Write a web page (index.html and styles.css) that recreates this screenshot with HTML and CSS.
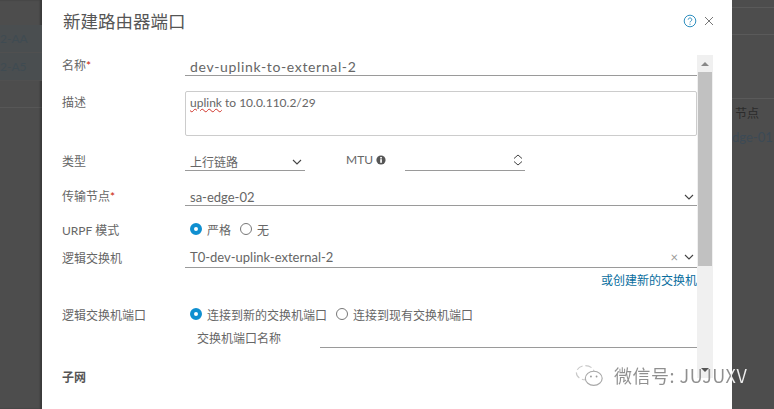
FILE: index.html
```html
<!DOCTYPE html>
<html lang="zh">
  <head>
    <meta charset="UTF-8" />
    <title>新建路由器端口</title>
    <link rel="stylesheet" href="styles.css">
  </head>
  <body>
    <div class="backdrop">
      <div class="side side-left">
        <div class="side-row">2-AA</div>
        <div class="side-row">2-A5</div>
      </div>
      <div class="dialog">
        <div class="dialog-head">
          <h3 class="dialog-title">新建路由器端口</h3>
          <div class="dialog-actions">
            <svg class="help-icon" viewBox="0 0 14 14" width="14" height="14">
              <circle cx="7" cy="7" r="5.8" fill="none" stroke="#2f8fc0" stroke-width="1"/>
              <path d="M5.2 5.6a1.8 1.7 0 1 1 2.7 1.5c-.6.4-.9.7-.9 1.3" fill="none" stroke="#2f8fc0" stroke-width="1"/>
              <circle cx="7" cy="10.2" r=".6" fill="#2f8fc0"/>
            </svg>
            <svg class="close-icon" viewBox="0 0 10 10" width="10" height="10">
              <path d="M1 1l8 8M9 1l-8 8" stroke="#777" stroke-width="1" fill="none"/>
            </svg>
          </div>
        </div>

        <div class="dialog-body">
          <div class="form">
            <div class="row row-name">
              <label class="label">名称<span class="req">*</span></label>
              <div class="field line">dev-uplink-to-external-2</div>
            </div>
            <div class="row row-desc">
              <label class="label">描述</label>
              <div class="field textarea"><span class="typo">uplink</span> to 10.0.110.2/29</div>
            </div>
            <div class="row row-type">
              <label class="label">类型</label>
              <div class="field line select-short">
                上行链路
                <svg class="chev" viewBox="0 0 10 6" width="10" height="6"><path d="M1 1l4 4 4-4" fill="none" stroke="#444" stroke-width="1.1"/></svg>
              </div>
              <label class="mtu-label">MTU
                <svg viewBox="0 0 10 10" width="10" height="10"><circle cx="5" cy="5" r="4.6" fill="#555"/><rect x="4.2" y="4.2" width="1.7" height="3.6" fill="#fff"/><rect x="4.2" y="2" width="1.7" height="1.5" fill="#fff"/></svg>
              </label>
              <div class="field line mtu-input">
                <svg viewBox="0 0 10 12" width="10" height="12"><path d="M1 4.5l4-3.5 4 3.5M1 7.5l4 3.5 4-3.5" fill="none" stroke="#444" stroke-width="1"/></svg>
              </div>
            </div>
            <div class="row row-node">
              <label class="label">传输节点<span class="req">*</span></label>
              <div class="field line">
                sa-edge-02
                <svg class="chev" viewBox="0 0 10 6" width="10" height="6"><path d="M1 1l4 4 4-4" fill="none" stroke="#444" stroke-width="1.1"/></svg>
              </div>
            </div>
            <div class="row row-urpf">
              <label class="label">URPF 模式</label>
              <div class="radios">
                <span class="radio radio-on"></span><span class="radio-text">严格</span>
                <span class="radio"></span><span class="radio-text">无</span>
              </div>
            </div>
            <div class="row row-switch">
              <label class="label">逻辑交换机</label>
              <div class="field line">
                T0-dev-uplink-external-2
                <span class="clear">×</span>
                <svg class="chev" viewBox="0 0 10 6" width="10" height="6"><path d="M1 1l4 4 4-4" fill="none" stroke="#444" stroke-width="1.1"/></svg>
              </div>
            </div>
            <div class="create-link">或创建新的交换机</div>
            <div class="row row-port">
              <label class="label">逻辑交换机端口</label>
              <div class="radios">
                <span class="radio radio-on"></span><span class="radio-text">连接到新的交换机端口</span>
                <span class="radio"></span><span class="radio-text">连接到现有交换机端口</span>
              </div>
            </div>
            <div class="row row-portname">
              <label class="sub-label">交换机端口名称</label>
              <div class="field line"></div>
            </div>
            <div class="section-title">子网</div>
          </div>
          <div class="scrollbar">
            <div class="scroll-btn"><span class="arrow-up"></span></div>
            <div class="scroll-thumb"></div>
            <div class="scroll-track"></div>
            <div class="scroll-btn"><span class="arrow-down"></span></div>
          </div>
        </div>
      </div>
      <div class="side side-right">
        <div class="side-head">节点</div>
        <div class="side-cell">dge-01</div>
      </div>
    </div>
    <div class="watermark">
      <svg viewBox="0 0 32 26" width="30" height="25">
        <ellipse cx="11" cy="10" rx="9.5" ry="7.5" fill="none" stroke="#c9c9c9" stroke-width="1.2" stroke-dasharray="7 3"/>
        <ellipse cx="20" cy="16" rx="9" ry="7.5" fill="#fff" stroke="#a8a8a8" stroke-width="1.2"/>
        <circle cx="17" cy="14" r="1" fill="#999"/>
        <circle cx="23" cy="14" r="1" fill="#999"/>
      </svg>
      <span class="watermark-text">微信号: JUJUXV</span>
    </div>
  </body>
</html>
```

FILE: styles.css
```css
html, body {
  margin: 0;
  height: 100%;
  overflow: hidden;
}
body {
  font-family: "Lato", "Noto Sans CJK SC", sans-serif;
  font-size: 12px;
  color: #666;
  background-color: #4d4d4d;
}
.backdrop {
  display: flex;
  height: 409px;
}
.side {
  width: 42px;
  background-color: #4d4d4d;
  overflow: hidden;
  white-space: nowrap;
}
.side-left {
  padding-top: 25px;
  background-image: linear-gradient(#575757, #575757);
  background-size: 100% 1px;
  background-position: 0 107px;
  background-repeat: no-repeat;
  box-shadow: inset -2px 0 2px rgba(0, 0, 0, 0.25);
}
.side-row {
  height: 27px;
  line-height: 27px;
  text-align: right;
  padding-right: 17px;
  background-color: #4a4e50;
  border-bottom: 1px solid #505050;
  color: #3f4b52;
}
.side-right {
  background-image: linear-gradient(#5a5a5a, #5a5a5a), linear-gradient(#5a5a5a, #5a5a5a), linear-gradient(#5a5a5a, #5a5a5a);
  background-size: 100% 1px;
  background-position: 0 7px, 0 34px, 0 98px;
  background-repeat: no-repeat;
  padding-top: 105px;
}
.side-head {
  color: #2b2b2b;
  padding-left: 3px;
  height: 24px;
  line-height: 18px;
}
.side-cell {
  color: #3c4a55;
  font-size: 13px;
  line-height: 16px;
}
.dialog {
  width: 690px;
  background-color: #fff;
  flex-shrink: 0;
  display: flex;
  flex-direction: column;
}
.dialog-head {
  display: flex;
  justify-content: space-between;
  align-items: center;
  height: 41px;
  padding: 0 18px 2px 21px;
}
.dialog-title {
  margin: 0;
  font-size: 17.5px;
  font-weight: 400;
  color: #555;
}
.dialog-actions {
  display: flex;
  align-items: center;
  gap: 7px;
}
.dialog-body {
  display: flex;
  padding: 12px 19px 0 20px;
}
.form {
  width: 635px;
}
.row {
  display: flex;
  align-items: flex-start;
}
.label {
  width: 123px;
  flex-shrink: 0;
  padding-top: 3px;
  line-height: 18px;
}
.req {
  color: #c92100;
}
.field {
  font-size: 13px;
  flex: 1;
}
.line {
  display: flex;
  justify-content: space-between;
  align-items: center;
  height: 17px;
  padding: 3px 3px 0 5px;
  border-bottom: 1px solid #9a9a9a;
}
.row-name {
  height: 36px;
}
.row-name .label {
  padding-top: 2px;
}
.row-name .line {
  font-size: 14px;
  letter-spacing: 0.65px;
}
.row-desc {
  height: 59px;
}
.textarea {
  height: 45px;
  padding: 3px 4px;
  border: 1px solid #ccc;
  border-radius: 2px;
  box-sizing: border-box;
  font-size: 12px;
  line-height: 15px;
}
.typo {
  text-decoration: underline wavy #d0352b 1px;
}
.row-type {
  height: 35px;
}
.select-short {
  flex: 0 0 112px;
  font-size: 12px;
}
.mtu-label {
  margin-left: 41px;
  width: 59px;
  flex-shrink: 0;
  line-height: 20px;
  display: flex;
  align-items: center;
  gap: 3px;
}
.mtu-input {
  flex: 0 0 112px;
  justify-content: flex-end;
  padding: 0 2px 0 6px;
  height: 20px;
}
.row-node {
  height: 34px;
}
.row-urpf {
  height: 28px;
}
.radios {
  display: flex;
  align-items: center;
  height: 18px;
  margin-top: 1px;
  padding-left: 5px;
}
.radio {
  width: 12px;
  height: 12px;
  border: 1px solid #777;
  border-radius: 50%;
  box-sizing: border-box;
  flex-shrink: 0;
}
.radio-on {
  border: 4px solid #0f8fd0;
  background-color: #fff;
}
.radio-text {
  margin: 0 9px 0 5px;
}
.row-switch .line {
  height: 20px;
  padding-top: 0;
}
.clear {
  margin-left: auto;
  margin-right: 6px;
  color: #999;
}
.create-link {
  text-align: right;
  color: #0a6e9e;
  line-height: 18px;
  margin-top: 4px;
  height: 32px;
}
.row-port {
  height: 23px;
}
.row-portname {
  height: 41px;
}
.sub-label {
  width: 258px;
  padding: 3px 0 0 135px;
  box-sizing: border-box;
  flex-shrink: 0;
  line-height: 18px;
}
.section-title {
  font-weight: 700;
  color: #555;
}
.scrollbar {
  width: 16px;
  height: 323px;
  background-color: #f0f0f0;
  display: flex;
  flex-direction: column;
  flex-shrink: 0;
}
.scroll-btn {
  height: 17px;
  display: flex;
  align-items: center;
  justify-content: center;
}
.arrow-up {
  border: 4px solid transparent;
  border-top: 0;
  border-bottom: 4px solid #888;
}
.arrow-down {
  border: 4px solid transparent;
  border-bottom: 0;
  border-top: 4px solid #555;
}
.scroll-thumb {
  height: 194px;
  background-color: #c1c1c1;
  margin: 0 1px;
}
.scroll-track {
  flex: 1;
}
.watermark {
  position: absolute;
  left: 575px;
  top: 362px;
  display: flex;
  align-items: center;
  gap: 9px;
  font-family: "Noto Sans CJK SC", sans-serif;
  font-size: 18px;
  letter-spacing: 0.5px;
}
.watermark-text {
  color: transparent;
  background: linear-gradient(90deg, #8f8f8f 117px, #eee 117px);
  -webkit-background-clip: text;
  background-clip: text;
}
```
